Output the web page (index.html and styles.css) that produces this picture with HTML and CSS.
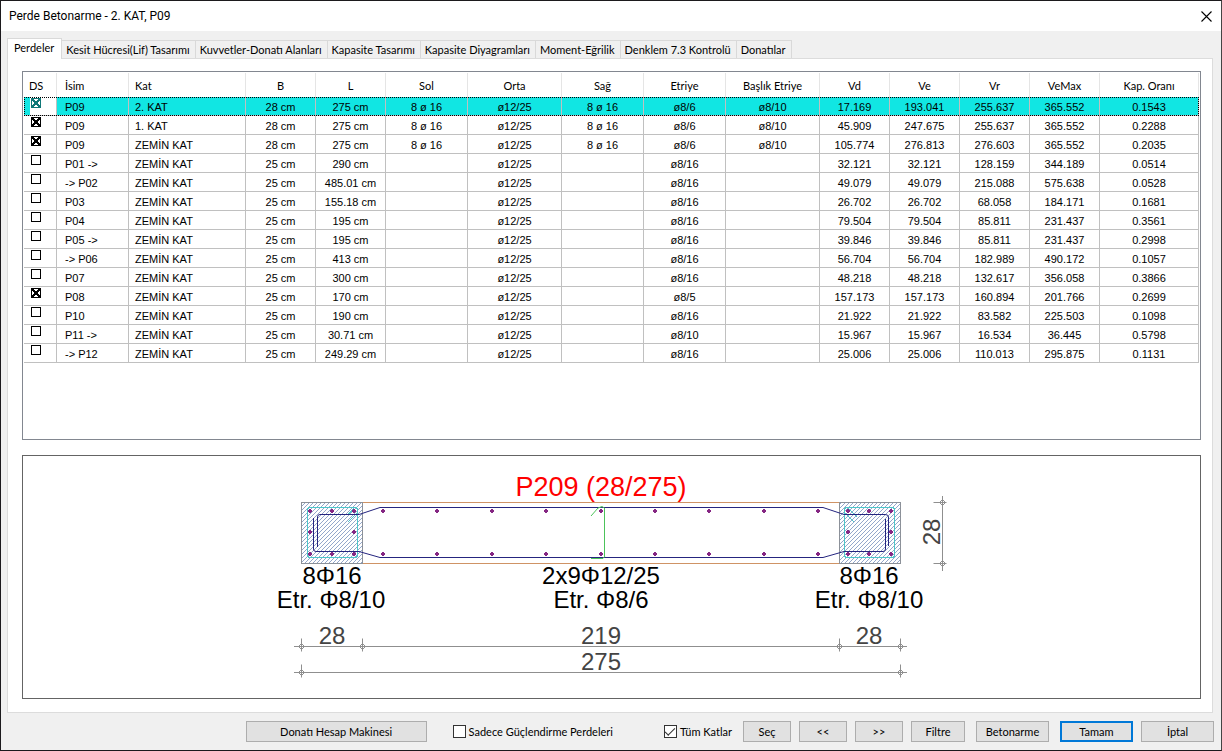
FILE: index.html
```html
<!DOCTYPE html>
<html lang="tr">
<head>
<meta charset="utf-8">
<meta name="viewport" content="width=device-width, initial-scale=1">
<title>Perde Betonarme - 2. KAT, P09</title>
<link rel="stylesheet" href="styles.css">
</head>
<body>
<div class="window">
  <header class="titlebar">
    <h1 class="title">Perde Betonarme - 2. KAT, P09</h1>
    <button class="close" type="button" aria-label="Kapat">
      <svg width="11" height="11" viewBox="0 0 11 11"><path d="M.5.5l10 10M10.500.5l-10 10" fill="none" stroke="#000" stroke-width="1.1"/></svg>
    </button>
  </header>

  <nav class="tabs" role="tablist">
    <button class="tab tab-active" type="button" role="tab" aria-selected="true">Perdeler</button>
    <button class="tab" type="button" role="tab">Kesit Hücresi(Lif) Tasarımı</button>
    <button class="tab" type="button" role="tab">Kuvvetler-Donatı Alanları</button>
    <button class="tab" type="button" role="tab">Kapasite Tasarımı</button>
    <button class="tab" type="button" role="tab">Kapasite Diyagramları</button>
    <button class="tab" type="button" role="tab">Moment-Eğrilik</button>
    <button class="tab" type="button" role="tab">Denklem 7.3 Kontrolü</button>
    <button class="tab" type="button" role="tab">Donatılar</button>
  </nav>

  <main class="panel">
    <section class="list">
      <table class="grid">
        <colgroup>
          <col class="c-ds"><col class="c-name"><col class="c-floor"><col class="c-70"><col class="c-70"><col class="c-82"><col class="c-94"><col class="c-82"><col class="c-82"><col class="c-94"><col class="c-70"><col class="c-70"><col class="c-70"><col class="c-70"><col class="c-ratio">
        </colgroup>
        <thead>
          <tr><th>DS</th><th>İsim</th><th>Kat</th><th>B</th><th>L</th><th>Sol</th><th>Orta</th><th>Sağ</th><th>Etriye</th><th>Başlık Etriye</th><th>Vd</th><th>Ve</th><th>Vr</th><th>VeMax</th><th>Kap. Oranı</th></tr>
        </thead>
        <tbody>
          <tr class="selected"><td><input type="checkbox" checked aria-label="P09, 2. KAT"></td><td>P09</td><td>2. KAT</td><td>28 cm</td><td>275 cm</td><td>8 ø 16</td><td>ø12/25</td><td>8 ø 16</td><td>ø8/6</td><td>ø8/10</td><td>17.169</td><td>193.041</td><td>255.637</td><td>365.552</td><td>0.1543</td></tr>
          <tr><td><input type="checkbox" checked aria-label="P09, 1. KAT"></td><td>P09</td><td>1. KAT</td><td>28 cm</td><td>275 cm</td><td>8 ø 16</td><td>ø12/25</td><td>8 ø 16</td><td>ø8/6</td><td>ø8/10</td><td>45.909</td><td>247.675</td><td>255.637</td><td>365.552</td><td>0.2288</td></tr>
          <tr><td><input type="checkbox" checked aria-label="P09, ZEMİN KAT"></td><td>P09</td><td>ZEMİN KAT</td><td>28 cm</td><td>275 cm</td><td>8 ø 16</td><td>ø12/25</td><td>8 ø 16</td><td>ø8/6</td><td>ø8/10</td><td>105.774</td><td>276.813</td><td>276.603</td><td>365.552</td><td>0.2035</td></tr>
          <tr><td><input type="checkbox" aria-label="P01"></td><td>P01 -&gt;</td><td>ZEMİN KAT</td><td>25 cm</td><td>290 cm</td><td></td><td>ø12/25</td><td></td><td>ø8/16</td><td></td><td>32.121</td><td>32.121</td><td>128.159</td><td>344.189</td><td>0.0514</td></tr>
          <tr><td><input type="checkbox" aria-label="P02"></td><td>-&gt; P02</td><td>ZEMİN KAT</td><td>25 cm</td><td>485.01 cm</td><td></td><td>ø12/25</td><td></td><td>ø8/16</td><td></td><td>49.079</td><td>49.079</td><td>215.088</td><td>575.638</td><td>0.0528</td></tr>
          <tr><td><input type="checkbox" aria-label="P03"></td><td>P03</td><td>ZEMİN KAT</td><td>25 cm</td><td>155.18 cm</td><td></td><td>ø12/25</td><td></td><td>ø8/16</td><td></td><td>26.702</td><td>26.702</td><td>68.058</td><td>184.171</td><td>0.1681</td></tr>
          <tr><td><input type="checkbox" aria-label="P04"></td><td>P04</td><td>ZEMİN KAT</td><td>25 cm</td><td>195 cm</td><td></td><td>ø12/25</td><td></td><td>ø8/16</td><td></td><td>79.504</td><td>79.504</td><td>85.811</td><td>231.437</td><td>0.3561</td></tr>
          <tr><td><input type="checkbox" aria-label="P05"></td><td>P05 -&gt;</td><td>ZEMİN KAT</td><td>25 cm</td><td>195 cm</td><td></td><td>ø12/25</td><td></td><td>ø8/16</td><td></td><td>39.846</td><td>39.846</td><td>85.811</td><td>231.437</td><td>0.2998</td></tr>
          <tr><td><input type="checkbox" aria-label="P06"></td><td>-&gt; P06</td><td>ZEMİN KAT</td><td>25 cm</td><td>413 cm</td><td></td><td>ø12/25</td><td></td><td>ø8/16</td><td></td><td>56.704</td><td>56.704</td><td>182.989</td><td>490.172</td><td>0.1057</td></tr>
          <tr><td><input type="checkbox" aria-label="P07"></td><td>P07</td><td>ZEMİN KAT</td><td>25 cm</td><td>300 cm</td><td></td><td>ø12/25</td><td></td><td>ø8/16</td><td></td><td>48.218</td><td>48.218</td><td>132.617</td><td>356.058</td><td>0.3866</td></tr>
          <tr><td><input type="checkbox" checked aria-label="P08"></td><td>P08</td><td>ZEMİN KAT</td><td>25 cm</td><td>170 cm</td><td></td><td>ø12/25</td><td></td><td>ø8/5</td><td></td><td>157.173</td><td>157.173</td><td>160.894</td><td>201.766</td><td>0.2699</td></tr>
          <tr><td><input type="checkbox" aria-label="P10"></td><td>P10</td><td>ZEMİN KAT</td><td>25 cm</td><td>190 cm</td><td></td><td>ø12/25</td><td></td><td>ø8/16</td><td></td><td>21.922</td><td>21.922</td><td>83.582</td><td>225.503</td><td>0.1098</td></tr>
          <tr><td><input type="checkbox" aria-label="P11"></td><td>P11 -&gt;</td><td>ZEMİN KAT</td><td>25 cm</td><td>30.71 cm</td><td></td><td>ø12/25</td><td></td><td>ø8/10</td><td></td><td>15.967</td><td>15.967</td><td>16.534</td><td>36.445</td><td>0.5798</td></tr>
          <tr><td><input type="checkbox" aria-label="P12"></td><td>-&gt; P12</td><td>ZEMİN KAT</td><td>25 cm</td><td>249.29 cm</td><td></td><td>ø12/25</td><td></td><td>ø8/16</td><td></td><td>25.006</td><td>25.006</td><td>110.013</td><td>295.875</td><td>0.1131</td></tr>
        </tbody>
      </table>
    </section>

    <section class="drawing">
      <svg class="section-view" viewBox="23 456 1177 242" role="img" aria-label="P209 perde kesiti">
        <defs>
          <pattern id="hatch" width="4" height="4" patternUnits="userSpaceOnUse">
            <path d="M3 0h1v1h-1zM2 1h1v1h-1zM1 2h1v1h-1zM0 3h1v1h-1z" fill="#93a7cb"/>
          </pattern>
          <g id="bar"><path d="M-1-2h2v1h1v2h-1v1h-2v-1h-1v-2h1z" fill="#852683"/></g>
          <g id="tick-h"><path d="M0-8V5M-3 0L0-3L3 0L0 3Z"/></g>
          <g id="tick-v"><path d="M-9 0H4M-3 0L0-3L3 0L0 3Z"/></g>
        </defs>

        <rect x="301" y="502" width="62" height="62" fill="url(#hatch)"/>
        <rect x="839" y="502" width="62" height="62" fill="url(#hatch)"/>
        <g fill="none" stroke="#cf9365"><path d="M362 502.500H840M362 563.500H840"/></g>
        <g fill="none" stroke="#8c9199"><rect x="301.500" y="502.500" width="61" height="61"/><rect x="839.500" y="502.500" width="61" height="61"/></g>
        <g fill="none" stroke="#4fc6ca" shape-rendering="crispEdges">
          <path d="M309 507.500H356L357.500 509V556L356 557.500H309L307.500 556V509Z"/>
          <path d="M348 514.500L354 508.500M348 522L358 512"/>
          <path d="M846 507.500H893L894.500 509V556L893 557.500H846L844.500 556V509Z"/>
          <path d="M844 512L854 522M848 508L857 517"/>
        </g>
        <g fill="none" stroke="#25257f">
          <path d="M823 507.500H380L359 514.500H320Q317.500 514.500 317.500 517V547"/>
          <path d="M823 557.500H380L359 551.500H316Q313.500 551.500 313.500 549V518"/>
          <path d="M823 507.500L844 514.500H885Q888.500 514.500 888.500 517V546"/>
          <path d="M823 557.500L844 551.500H883Q885.500 551.500 885.500 549V519"/>
        </g>
        <path d="M591 516L598 508L602 506.500L604.500 508V556M605 556L603 558.500H591" fill="none" stroke="#4cc35a"/>
        <g>
          <use href="#bar" x="310" y="511"/><use href="#bar" x="332" y="511"/><use href="#bar" x="354" y="511"/>
          <use href="#bar" x="310" y="532"/><use href="#bar" x="354" y="532"/>
          <use href="#bar" x="310" y="554"/><use href="#bar" x="332" y="554"/><use href="#bar" x="354" y="554"/>
          <use href="#bar" x="383" y="511"/><use href="#bar" x="437" y="511"/><use href="#bar" x="492" y="511"/><use href="#bar" x="546" y="511"/><use href="#bar" x="601" y="511"/><use href="#bar" x="655" y="511"/><use href="#bar" x="709" y="511"/><use href="#bar" x="764" y="511"/><use href="#bar" x="818" y="511"/>
          <use href="#bar" x="383" y="554"/><use href="#bar" x="437" y="554"/><use href="#bar" x="492" y="554"/><use href="#bar" x="546" y="554"/><use href="#bar" x="601" y="554"/><use href="#bar" x="655" y="554"/><use href="#bar" x="709" y="554"/><use href="#bar" x="764" y="554"/><use href="#bar" x="818" y="554"/>
          <use href="#bar" x="848" y="511"/><use href="#bar" x="869" y="511"/><use href="#bar" x="891" y="511"/>
          <use href="#bar" x="848" y="532"/><use href="#bar" x="891" y="532"/>
          <use href="#bar" x="848" y="554"/><use href="#bar" x="869" y="554"/><use href="#bar" x="891" y="554"/>
        </g>
        <g fill="none" stroke="#8f8f8f">
          <path d="M294 646.500H907M294 672.500H907M942.500 496V571"/>
          <use href="#tick-h" x="301.500" y="646.500"/><use href="#tick-h" x="362.500" y="646.500"/><use href="#tick-h" x="839.500" y="646.500"/><use href="#tick-h" x="900.500" y="646.500"/>
          <use href="#tick-h" x="301.500" y="672.500"/><use href="#tick-h" x="900.500" y="672.500"/>
          <use href="#tick-v" x="942.500" y="502.500"/><use href="#tick-v" x="942.500" y="563.500"/>
        </g>
        <text class="mark" x="601" y="496">P209 (28/275)</text>
        <g class="rebar">
          <text x="332" y="584">8Φ16</text><text x="331" y="608">Etr. Φ8/10</text>
          <text x="601" y="584">2x9Φ12/25</text><text x="601" y="608">Etr. Φ8/6</text>
          <text x="869" y="584">8Φ16</text><text x="869" y="608">Etr. Φ8/10</text>
        </g>
        <g class="dim">
          <text x="332" y="644">28</text><text x="601" y="644">219</text><text x="869" y="644">28</text>
          <text x="601" y="670">275</text>
          <text transform="translate(940 532) rotate(-90)">28</text>
        </g>
      </svg>
    </section>
  </main>

  <footer class="footer">
    <button class="btn btn-calc" type="button">Donatı Hesap Makinesi</button>
    <label class="check check-only"><input type="checkbox">Sadece Güçlendirme Perdeleri</label>
    <label class="check"><input type="checkbox" checked>Tüm Katlar</label>
    <div class="group">
      <button class="btn btn-small" type="button">Seç</button>
      <button class="btn btn-small" type="button">&lt;&lt;</button>
      <button class="btn btn-small" type="button">&gt;&gt;</button>
      <button class="btn btn-filter" type="button">Filtre</button>
    </div>
    <button class="btn btn-wide" type="button">Betonarme</button>
    <div class="group">
      <button class="btn btn-wide btn-default" type="button">Tamam</button>
      <button class="btn btn-wide" type="button">İptal</button>
    </div>
  </footer>
</div>
</body>
</html>
```
FILE: styles.css
```css
* { box-sizing: border-box; }

body {
  margin: 0;
  background: #f0f0f0;
  color: #000;
  font-family: Tahoma, Lato, "Open Sans", sans-serif;
  font-size: 11px;
  line-height: 14px;
}

button, input { font: inherit; color: inherit; margin: 0; }

.window {
  display: flex;
  flex-direction: column;
  min-height: 100vh;
  border: 1px solid #1c1a1d;
  border-right-color: #444;
  background: #f0f0f0;
}

.titlebar {
  display: flex;
  align-items: center;
  justify-content: space-between;
  height: 30px;
  padding: 0 9px 0 8px;
  background: #fff;
}
.title {
  margin: 0;
  font-family: "Segoe UI", Roboto, sans-serif;
  font-size: 12px;
  font-weight: 400;
}
.close { display: flex; padding: 0; border: 0; background: none; }

.tabs {
  display: flex;
  align-items: flex-end;
  margin: 7px 8px 0 6px;
}
.tab {
  height: 18px;
  padding: 0 5px 0 4px;
  border: 1px solid #d9d9d9;
  border-width: 1px 1px 0 0;
  background: #f0f0f0;
  white-space: nowrap;
}
.tab-active {
  height: 21px;
  margin-bottom: -1px;
  padding: 0 7px 2px 6px;
  border-left-width: 1px;
  background: #fff;
  z-index: 1;
}

.panel {
  flex: 1;
  display: flex;
  flex-direction: column;
  gap: 15px;
  margin: 0 8px 0 6px;
  padding: 12px 11px 13px 14px;
  border: 1px solid #dcdcdc;
  background: #fff;
}

.list {
  flex: 1;
  padding: 1px;
  border: 1px solid #828790;
}

.grid {
  width: 100%;
  table-layout: fixed;
  border-collapse: separate;
  border-spacing: 0;
}
.c-ds { width: 33px; }
.c-name { width: 72px; }
.c-floor { width: 117px; }
.c-70 { width: 70px; }
.c-82 { width: 82px; }
.c-94 { width: 94px; }
.c-ratio { width: 99px; }

.grid th, .grid td {
  padding: 2px 0 0;
  border-right: 1px solid #c0c0c0;
  text-align: center;
  white-space: nowrap;
  overflow: hidden;
}
.grid th {
  height: 24px;
  border-right-color: #e5e5e5;
  font-weight: 400;
}
.grid td {
  height: 19px;
  border-bottom: 1px solid #c0c0c0;
  font-family: "Liberation Sans", Arial, sans-serif;
}
.grid th:nth-child(-n+3), .grid td:nth-child(-n+3) { text-align: left; }
.grid th:nth-child(1) { padding-left: 5px; }
.grid td:nth-child(1) { padding: 1px 0 0 7px; vertical-align: top; }
.grid th:nth-child(2), .grid td:nth-child(2) { padding-left: 8px; }
.grid th:nth-child(3), .grid td:nth-child(3) { padding-left: 6px; }

.grid input {
  appearance: none;
  display: block;
  width: 10px;
  height: 10px;
  border: 1px solid currentColor;
  background: #fff;
}
.grid input:checked {
  background:
    linear-gradient(45deg, transparent 43%, currentColor 43%, currentColor 57%, transparent 57%),
    linear-gradient(-45deg, transparent 43%, currentColor 43%, currentColor 57%, transparent 57%),
    #fff;
}
.selected { outline: 1px dotted #000; outline-offset: -1px; }
.selected td { background: #11e6e3; }
.selected td:first-child {
  background: linear-gradient(90deg, #11e6e3 6px, #fff 6px);
  color: #107878;
}

.drawing { border: 1px solid #646464; }
.section-view {
  display: block;
  width: 100%;
  height: 242px;
  font-family: "Liberation Sans", Arial, sans-serif;
  text-anchor: middle;
}
.mark { font-size: 27px; fill: #f00; }
.rebar { font-size: 24px; fill: #000; }
.dim { font-size: 24px; fill: #444; }

.footer {
  display: flex;
  align-items: center;
  justify-content: flex-end;
  gap: 11px;
  padding: 8px 7px;
}
.group { display: flex; gap: 8px; }
.btn {
  height: 21px;
  padding: 0;
  border: 1px solid #adadad;
  background: #e1e1e1;
}
.btn-calc { width: 181px; margin-right: 15px; }
.btn-small { width: 48px; }
.btn-filter { width: 54px; }
.btn-wide { width: 73px; }
.btn-default { border: 2px solid #0078d7; }

.check { display: flex; align-items: center; gap: 3px; white-space: nowrap; }
.check-only { margin-right: 40px; }
.check input {
  appearance: none;
  display: grid;
  place-items: center;
  width: 13px;
  height: 13px;
  border: 1px solid #333;
  background: #fff;
}
.check input:checked::before {
  content: "";
  width: 9px;
  height: 4px;
  border: solid #333;
  border-width: 0 0 1px 1px;
  transform: translateY(-1px) rotate(-45deg);
}
```
